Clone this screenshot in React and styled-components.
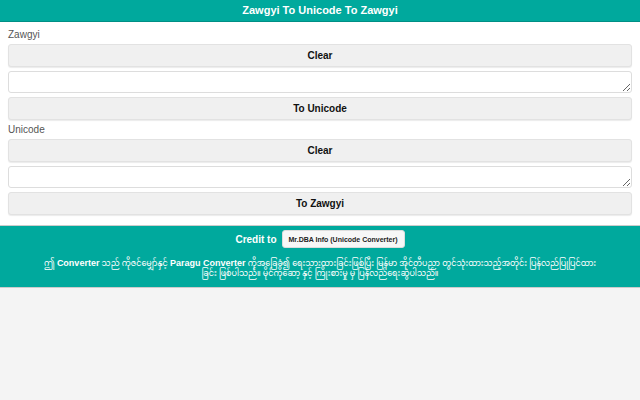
import React from "react";
import styled, { createGlobalStyle } from "styled-components";

const Global = createGlobalStyle`
  html, body { margin: 0; background: #f4f4f4; font-family: "Liberation Sans", Arial, sans-serif; }
`;
const Header = styled.div`
  background: #00a99d; color: #fff; font-weight: bold; font-size: 11px;
  height: 21px; line-height: 21px; text-align: center; border-bottom: 1px solid #008f85;
`;
const Main = styled.div`
  background: #fff; padding: 6px 8px 10px; display: flex; flex-direction: column; gap: 3px;
`;
const Label = styled.div`
  font-size: 10px; color: #555; height: 13px; line-height: 13px;
`;
const Btn = styled.button`
  height: 23px; background: #f0f0f0; border: 1px solid #e2e2e2; border-radius: 3px;
  box-shadow: 0 1px 1px rgba(0,0,0,0.08);
  font: bold 10px "Liberation Sans", Arial, sans-serif; color: #111; width: 100%;
`;
const Area = styled.textarea`
  height: 16px; border: 1px solid #ddd; border-radius: 3px; margin: 1px 0; padding: 2px;
`;
const Footer = styled.div`
  background: #00a99d; color: #fff; padding: 4px 40px 8px; text-align: center;
  border-top: 1px solid #ccc; border-bottom: 1px solid #ccc;
`;
const Credit = styled.div`
  display: flex; justify-content: center; align-items: center; gap: 5px;
  font-weight: bold; font-size: 10px;
`;
const CreditBtn = styled.button`
  background: #f7f7f7; border: 1px solid #ddd; border-radius: 3px; height: 18px;
  font: bold 7px "Liberation Sans", Arial, sans-serif; color: #222; padding: 0 6px;
`;
const Note = styled.div`
  font-size: 8px; line-height: 10px; margin-top: 10px;
  font-family: "Liberation Sans", "Noto Sans Myanmar", "Padauk", sans-serif;
  b { font-weight: bold; font-size: 9px; }
`;

export default function App() {
  return (
    <>
      <Global />
      <Header>Zawgyi To Unicode To Zawgyi</Header>
      <Main>
        <Label>Zawgyi</Label>
        <Btn>Clear</Btn>
        <Area />
        <Btn>To Unicode</Btn>
        <Label>Unicode</Label>
        <Btn>Clear</Btn>
        <Area />
        <Btn>To Zawgyi</Btn>
      </Main>
      <Footer>
        <Credit>Credit to <CreditBtn>Mr.DBA Info (Unicode Converter)</CreditBtn></Credit>
        <Note>
          ဤ <b>Converter</b> သည် ကိုဇင်မျှော်နှင့် <b>Paragu Converter</b> ကိုအခြေခံ၍ ရေးသားထားခြင်းဖြစ်ပြီး မြန်မာ အိုင်တီပညာ တွင်သုံးထားသည့်အတိုင်း ပြန်လည်ပြုပြင်ထားခြင်း ဖြစ်ပါသည်။
          မိုင်ကိုဆော့ နှင့် ကြိုးစားမှု မှ ပြန်လည်ရေးဆွဲပါသည်။
        </Note>
      </Footer>
    </>
  );
}
